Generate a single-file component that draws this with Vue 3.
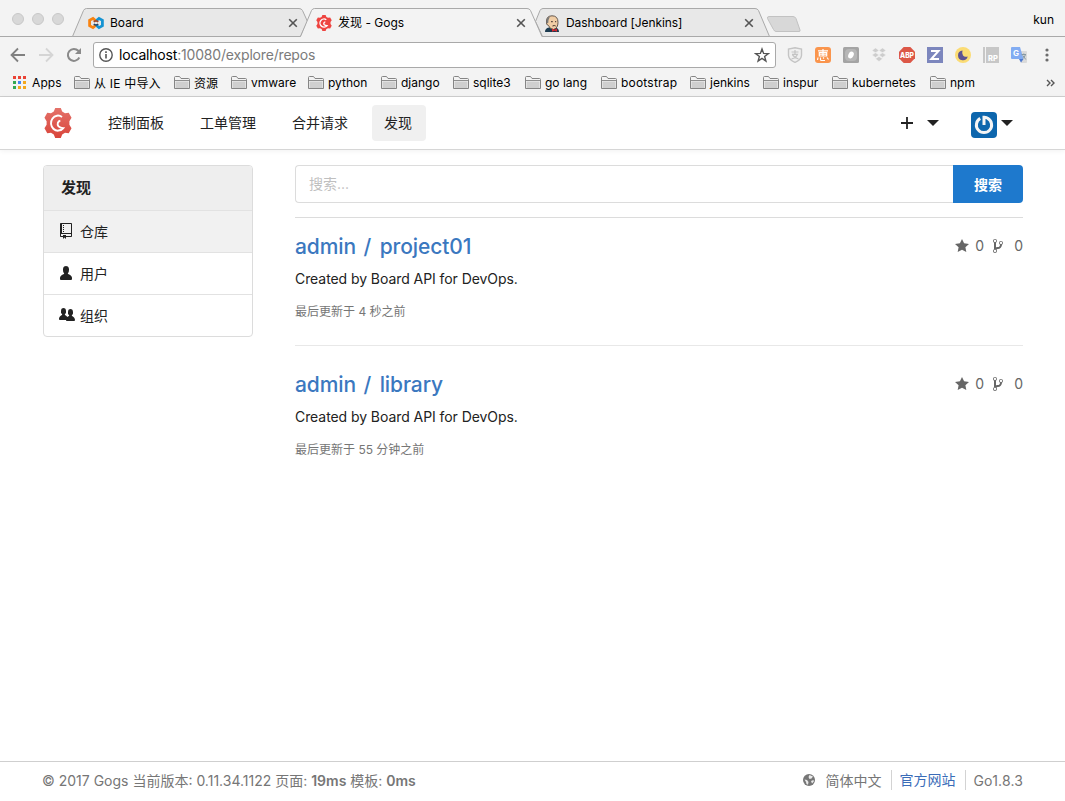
<script setup>
const bookmarks = ['从 IE 中导入', '资源', 'vmware', 'python', 'django', 'sqlite3', 'go lang', 'bootstrap', 'jenkins', 'inspur', 'kubernetes', 'npm']
const appColors = ['#ea4335', '#ea4335', '#ea4335', '#34a853', '#4285f4', '#f4a81c', '#34a853', '#f4a81c', '#f4a81c']
const repos = [
  { owner: 'admin', name: 'project01', updated: '最后更新于 4 秒之前' },
  { owner: 'admin', name: 'library', updated: '最后更新于 55 分钟之前' }
]
const gear = 'M12 0h6l1.500 3.600 3 1.700 4-.5 3 5-2.300 3.400v3.600L29.500 20.200l-3 5-4-.5-3 1.700L18 30h-6l-1.500-3.600-3-1.700-4 .5-3-5 2.300-3.400v-3.600L.5 9.800l3-5 4 .5 3-1.700z'
const gogsG = 'M19.300 9A7.500 7.500 0 1 0 20.500 20.200Q17.500 20 15.500 18.300A3.300 3.300 0 0 1 17.500 12.800'
</script>

<template>
  <div class="page">
    <div class="tabstrip">
      <svg class="tabshapes" width="1065" height="37" viewBox="0 0 1065 37">
        <path d="M0 36.500H1065" stroke="#a9a9a9" />
        <path d="M72.500 36.500 83.500 10.500Q84.500 8.500 86.500 8.500H299Q301.500 8.500 302.500 10.500L307.500 21.500 300.500 36.500Z" fill="#e8e8e8" stroke="#a9a9a9" />
        <path d="M542.500 36.500 535.500 21.500 540 10.500Q541 8.500 543 8.500H755Q757.500 8.500 758.500 10.500L769.500 36.500Z" fill="#e8e8e8" stroke="#a9a9a9" />
        <path d="M300.500 37 311.500 10.500Q312.500 8.500 314.500 8.500H527Q529.500 8.500 530.500 10.500L542 37Z" fill="#f3f3f3" />
        <path d="M300.500 36.500 311.500 10.500Q312.500 8.500 314.500 8.500H527Q529.500 8.500 530.500 10.500L542 36.500" fill="none" stroke="#a9a9a9" />
        <path d="M769 16.500H793Q795 16.500 796 18.500L800 30Q800.500 31.500 799 31.500H776Q774.500 31.500 773.500 29.500L767.500 18.500Q767 16.500 769 16.500Z" fill="#d8d8d8" stroke="#c2c2c2" />
      </svg>
      <div class="lights"><i></i><i></i><i></i></div>
      <div class="tab">
        <svg width="16" height="16" viewBox="0 0 16 16" fill="none" stroke-width="2.800">
          <path d="M7.500 5.500 5 3.400 1.600 5.300v5.400L5 12.600 7.500 10.500" stroke="#f98310" />
          <path d="M8.500 5.500 11 3.400 14.400 5.300v5.400L11 12.600 8.500 10.500" stroke="#1593d2" />
          <path d="M5.800 7q2.200-2.200 4.400 0" stroke="#a04a2a" stroke-width="1.600" /><path d="M5.800 9q2.200 2.200 4.400 0" stroke="#254465" stroke-width="1.600" />
        </svg>
        <span>Board</span>
        <svg class="close" width="10" height="10" viewBox="0 0 10 10"><path d="M1.200 1.200l7.600 7.600M8.800 1.200l-7.600 7.600" /></svg>
      </div>
      <div class="tab">
        <svg width="16" height="16" viewBox="0 0 30 30"><path :d="gear" fill="#ee4440" /><path :d="gogsG" fill="none" stroke="#fff" stroke-width="2.600" /></svg>
        <span class="cjk">发现 - Gogs</span>
        <svg class="close" width="10" height="10" viewBox="0 0 10 10"><path d="M1.200 1.200l7.600 7.600M8.800 1.200l-7.600 7.600" /></svg>
      </div>
      <div class="tab">
        <svg width="16" height="17" viewBox="0 0 16 17">
          <path d="M1 17q0-4 4-4.500h7q3 1 3 4.500z" fill="#1c3b50" />
          <path d="M2.500 7Q2 1 8 .8q6 0 6 6.500 0 6-4.500 7.200-4-.5-5-4Q2 10 2.500 7z" fill="#f0cda5" stroke="#55483f" stroke-width=".9" />
          <path d="M2.600 8Q2 2 6 1.400L4.500 5 4.200 8z" fill="#777" />
          <path d="M7 6.700h1.800M11 6.700h1.200M8.500 11q2-1 3.200 0" stroke="#3b2e29" fill="none" />
          <path d="M8 13.500l2.500 1.300 2.500-1.300v3.300l-2.500-1-2.500 1z" fill="#d5272f" />
        </svg>
        <span class="jenkins">Dashboard [Jenkins]</span>
        <svg class="close" width="10" height="10" viewBox="0 0 10 10"><path d="M1.200 1.200l7.600 7.600M8.800 1.200l-7.600 7.600" /></svg>
      </div>
      <span class="profile">kun</span>
    </div>

    <div class="toolbar">
      <svg class="back" width="16" height="16" viewBox="0 0 16 16"><path d="M15 8H2M8 1.500 1.500 8 8 14.500" fill="none" stroke="#808080" stroke-width="1.800" /></svg>
      <svg class="fwd" width="16" height="16" viewBox="0 0 16 16"><path d="M1 8h13M8 1.500 14.500 8 8 14.500" fill="none" stroke="#d5d5d5" stroke-width="1.800" /></svg>
      <svg class="reload" width="16" height="16" viewBox="0 0 16 16"><path d="M13.300 10.500A6 6 0 1 1 12.300 3.800L14 5.500" fill="none" stroke="#8a8a8a" stroke-width="2" /><path d="M15 1v6H9z" fill="#8a8a8a" /></svg>
      <div class="address">
        <svg width="14" height="14" viewBox="0 0 14 14"><circle cx="7" cy="7" r="6.200" fill="none" stroke="#555" stroke-width="1.400" /><path d="M7 6v4.500M7 3.300v1.600" stroke="#555" stroke-width="1.600" /></svg>
        <span class="url"><b>localhost</b>:10080/explore/repos</span>
        <svg class="star" width="16" height="16" viewBox="0 0 16 16"><path d="M8 2l1.600 4.400 4.700.2-3.700 2.900 1.300 4.500L8 11.400 4.100 14l1.300-4.500-3.700-2.900 4.700-.2z" fill="none" stroke="#555" stroke-width="1.400" /></svg>
      </div>
      <div class="exts">
        <svg viewBox="0 0 16 16"><path d="M8 .8 14.500 2v6.500Q14 13 8 15.400 2 13 1.500 8.500V2z" fill="#f0f0f0" stroke="#c4c4c4" stroke-width="1.400" /><path d="M4.500 5h7M8 3v4M5 7.300h5.500Q9 11 4.500 12M5.500 8Q8 11 11.500 12" fill="none" stroke="#c4c4c4" stroke-width="1.200" /></svg>
        <svg viewBox="0 0 16 16"><rect width="16" height="16" rx="3" fill="#fa954d" /><path d="M3 3.800h10M8 2v7M4.300 5.500h7.400V9H4.300zM4.300 7.200h7.400M3 10.500 2.500 13M5.500 10.500v2q0 1 1 1h3.500M8 10.500l1 1M12 10.500l1.500 2" fill="none" stroke="#fff" stroke-width="1.200" /></svg>
        <svg viewBox="0 0 16 16"><rect width="16" height="16" rx="1.500" fill="#a4a4a4" /><rect x="2" y="2" width="12" height="12" rx="4" fill="#b7b7b7" /><ellipse cx="8" cy="8" rx="2.600" ry="3.600" transform="rotate(25 8 8)" fill="#fff" /></svg>
        <svg viewBox="0 0 16 16" fill="#cdcdcd"><path d="M4.500 1 8 3.400 4.500 5.700 1 3.400zM11.500 1 15 3.400 11.500 5.700 8 3.400zM4.500 5.700 8 8l-3.500 2.400L1 8zM11.500 5.700 15 8l-3.500 2.400L8 8zM8 9.500l3.500 2.300L8 14.500l-3.500-2.700z" stroke="#f3f3f3" stroke-width=".5" /></svg>
        <svg viewBox="0 0 16 16"><path d="M4.700 0h6.600L16 4.700v6.600L11.300 16H4.700L0 11.300V4.700z" fill="#dc5747" /><text x="8" y="10.600" text-anchor="middle" font-size="7" font-weight="800" textLength="14" lengthAdjust="spacingAndGlyphs" fill="#fff">ABP</text></svg>
        <svg viewBox="0 0 16 16"><rect width="16" height="16" fill="#7c86bd" /><path d="M4 4h7.500L4.300 12H12" fill="none" stroke="#fff" stroke-width="2" /></svg>
        <svg viewBox="0 0 16 16"><circle cx="8" cy="8" r="8" fill="#fbdc74" /><path d="M7.500 3.500a4.900 4.900 0 1 0 5.200 6Q9.500 10.500 8 8.500 6.700 6 7.500 3.500z" fill="#5d5292" /></svg>
        <svg viewBox="0 0 16 16"><path d="M0 0h2v16H0zM3 0h13v16H3z" fill="#c7c7c7" /><text x="10" y="14" text-anchor="middle" font-size="7.500" font-weight="800" fill="#fff">RP</text></svg>
        <svg viewBox="0 0 16 16"><path d="M6 4h9q1 0 1 1v10q0 1-1 1H10z" fill="#dadada" /><path d="M1 0h8l3.500 12H1q-1 0-1-1V1q0-1 1-1z" fill="#82acf2" /><path d="M8 12h4.500L10 15.500z" fill="#4d79cf" /><text x="5" y="9" text-anchor="middle" font-size="8" font-weight="700" fill="#fff">G</text><path d="M10.500 7.500H15M12.800 6.500v1M14.500 7.500q-1 3-2.500 4M11.800 8.500l3 4" stroke="#8598a4" fill="none" /></svg>
      </div>
      <svg class="more" width="4" height="14" viewBox="0 0 4 14" fill="#6c6c6c"><circle cx="2" cy="2" r="1.600" /><circle cx="2" cy="7" r="1.600" /><circle cx="2" cy="12" r="1.600" /></svg>
    </div>

    <div class="bookmarks">
      <div class="bm apps">
        <svg width="13" height="13" viewBox="0 0 13 13"><rect v-for="(c, i) in appColors" :key="i" :x="(i % 3) * 5" :y="Math.floor(i / 3) * 5" width="3" height="3" :fill="c" /></svg>
        <span>Apps</span>
      </div>
      <div v-for="(b, i) in bookmarks" :key="b" class="bm" :class="{ first: i === 0, wide: b === 'bootstrap' }">
        <svg width="16" height="13" viewBox="0 0 16 13"><path d="M.5 12V1.500q0-1 1-1h4l1.500 2h7.500q1 0 1 1V12.500H.5z" fill="#f3f3f3" stroke="#858585" /><path d="M1.500 5.500h13v6.500h-13z" fill="#cfcfcf" /><path d="M1 4.500h14" stroke="#8f8f8f" /></svg>
        <span>{{ b }}</span>
      </div>
      <svg class="chev" width="9" height="8" viewBox="0 0 9 8"><path d="M1 1l3 3-3 3M5 1l3 3-3 3" fill="none" stroke="#555" stroke-width="1.400" /></svg>
    </div>

    <nav class="nav">
      <svg class="logo" width="28" height="30" viewBox="0 0 30 30" preserveAspectRatio="none">
        <defs><linearGradient id="lg" x2="0" y2="1"><stop stop-color="#e4726a" /><stop offset="1" stop-color="#d9443a" /></linearGradient></defs>
        <path :d="gear" fill="url(#lg)" /><path :d="gogsG" fill="none" stroke="#fff" stroke-width="2" />
      </svg>
      <a>控制面板</a><a>工单管理</a><a>合并请求</a><a class="on">发现</a>
      <div class="right">
        <svg width="12" height="12" viewBox="0 0 12 12"><path d="M6 0v12M0 6h12" stroke="#222" stroke-width="1.800" /></svg>
        <svg class="car1" width="12" height="6" viewBox="0 0 12 6"><path d="M0 0h12L6 6z" fill="#222" /></svg>
        <svg class="avatar" width="26" height="26" viewBox="0 0 26 26"><rect width="26" height="26" rx="4" fill="#0d66ad" /><path d="M9.200 6.400A7.600 7.600 0 1 0 16.800 6.400M13 13V5.300Q15.500 5.200 17.500 6.800" fill="none" stroke="#f5f5f5" stroke-width="3" /></svg>
        <svg class="car2" width="12" height="6" viewBox="0 0 12 6"><path d="M0 0h12L6 6z" fill="#222" /></svg>
      </div>
    </nav>

    <main>
      <aside>
        <h4>发现</h4>
        <a class="on"><svg width="16" height="16" viewBox="-1 0 16 16"><path d="M4 9H3V8h1v1zm0-3H3v1h1V6zm0-2H3v1h1V4zm0-2H3v1h1V2zm8-1v12c0 .55-.45 1-1 1H6v2l-1.500-1.500L3 16v-2H1c-.55 0-1-.45-1-1V1c0-.55.45-1 1-1h10c.55 0 1 .45 1 1zm-1 10H1v2h2v-1h3v1h5v-2zm0-10H2v9h9V1z" /></svg><span>仓库</span></a>
        <a><svg width="16" height="16" viewBox="-1 0 16 16"><path d="M12 14.002a.998.998 0 0 1-.998.998H1.001A1 1 0 0 1 0 13.999V13c0-2.633 4-4 4-4s.229-.409 0-1c-.841-.62-.944-1.590-1-4 .173-2.413 1.867-3 3-3s2.827.586 3 3c-.056 2.410-.159 3.380-1 4-.229.590 0 1 0 1s4 1.367 4 4v1.002z" /></svg><span>用户</span></a>
        <a><svg width="16" height="16" viewBox="0 0 16 16"><path d="M16 12.999c0 .439-.45 1-1 1H7.995c-.539 0-.994-.447-.995-.999H1c-.54 0-1-.561-1-1 0-2.634 3-4 3-4s.229-.409 0-1c-.841-.621-1.058-.59-1-3 .058-2.419 1.367-3 2.500-3s2.442.58 2.500 3c.058 2.410-.159 2.379-1 3-.229.590 0 1 0 1s1.549.711 2.420 2.088C9.196 9.369 10 8.999 10 8.999s.229-.409 0-1c-.841-.62-1.058-.59-1-3 .058-2.419 1.367-3 2.500-3s2.437.581 2.495 3c.059 2.410-.158 2.380-1 3-.229.590 0 1 0 1s3.005 1.366 3.005 4" /></svg><span>组织</span></a>
      </aside>
      <section>
        <div class="search"><div class="field">搜索...</div><button>搜索</button></div>
        <div v-for="r in repos" :key="r.name" class="repo">
          <div class="head">
            <h2>{{ r.owner }} <i>/</i> {{ r.name }}</h2>
            <div class="stats">
              <svg class="s" width="14" height="16" viewBox="0 0 14 16"><path d="M14 6l-4.900-.64L7 1 4.900 5.360 0 6l3.600 3.260L2.670 14 7 11.670 11.330 14l-.93-4.740z" /></svg>
              <span>0</span>
              <svg class="f" width="10" height="16" viewBox="0 0 10 16"><path d="M10 5c0-1.110-.89-2-2-2a1.993 1.993 0 0 0-1 3.720v.3c-.02.52-.23.98-.63 1.380-.4.4-.86.61-1.380.63-.83.02-1.480.16-2 .45V4.720a1.993 1.993 0 0 0-1-3.720C.88 1 0 1.890 0 3a2 2 0 0 0 1 1.720v6.560c-.59.35-1 .99-1 1.720 0 1.110.89 2 2 2 1.110 0 2-.89 2-2 0-.53-.2-1-.53-1.360.09-.06.48-.41.59-.47.25-.11.56-.17.94-.17 1.050-.05 1.950-.45 2.750-1.250S8.950 7.770 9 6.730h-.02C9.590 6.370 10 5.730 10 5zM2 1.800c.66 0 1.200.55 1.200 1.200 0 .65-.55 1.200-1.200 1.200C1.350 4.200.8 3.650.8 3c0-.65.55-1.200 1.200-1.200zm0 12.410c-.66 0-1.200-.55-1.200-1.200 0-.65.55-1.200 1.200-1.200.65 0 1.200.55 1.200 1.200 0 .65-.55 1.200-1.200 1.200zm6-8c-.66 0-1.200-.55-1.200-1.200 0-.65.55-1.200 1.200-1.200.65 0 1.200.55 1.200 1.200 0 .65-.55 1.200-1.200 1.200z" /></svg>
              <span>0</span>
            </div>
          </div>
          <p class="desc">Created by Board API for DevOps.</p>
          <p class="time">{{ r.updated }}</p>
        </div>
      </section>
    </main>

    <footer>
      <span class="copy">© 2017 Gogs 当前版本: 0.11.34.1122 页面: <b>19ms</b> 模板: <b>0ms</b></span>
      <div class="links">
        <svg width="12" height="12" viewBox="0 0 12 12"><circle cx="6" cy="6" r="6" fill="#767676" /><path d="M6.500 1 10 2.500 8.500 4.500 6.500 5 5.500 3zM1.500 5.500 4 6l1.500 2L5 10.800 3.500 10 3 8zM8 7l2.500-1 .3 1.500L9 9.500z" fill="#fff" opacity=".85" /></svg>
        <span class="lang">简体中文</span><a class="site">官方网站</a><span class="go">Go1.8.3</span>
      </div>
    </footer>
  </div>
</template>

<style>
body { margin: 0; background: #fff; overflow: hidden; }
</style>
<style scoped>
* { box-sizing: border-box; }
svg { display: block; flex: none; }
.page { width: 1065px; height: 801px; display: flex; flex-direction: column; background: #fff; font-family: Inter, "Noto Sans CJK SC", sans-serif; color: #222; font-size: 14px; white-space: nowrap; }
.tabstrip { position: relative; height: 37px; flex: none; display: flex; background: #f3f3f3; color: #000; font-size: 12px; }
.tabshapes { position: absolute; left: 0; top: 0; }
.lights { display: flex; gap: 8px; padding: 13px 0 0 12px; width: 88px; }
.lights i { width: 12px; height: 12px; border-radius: 50%; background: #d8d8d8; border: 1px solid #c8c8c8; }
.tab { position: relative; width: 228px; height: 30px; margin-top: 8px; display: flex; align-items: center; }
.tab span { margin-left: 6px; flex: 1; padding-bottom: 2px; }
.tab .cjk { padding-bottom: 3px; }
.tab .jenkins { letter-spacing: -.08px; }
.close { margin-right: 18px; stroke: #555; stroke-width: 1.6; }
.profile { position: relative; margin: 12px 11px 0 auto; }
.toolbar { height: 36px; flex: none; display: flex; align-items: center; background: #f3f3f3; padding-left: 10px; }
.fwd { margin-left: 12px; }
.reload { margin: 0 11px 0 12px; }
.address { width: 683px; height: 26px; background: #fff; border: 1px solid #a9a9a9; border-radius: 3px; display: flex; align-items: center; padding: 0 5px; }
.url { margin-left: 6px; font-size: 14px; color: #7b7b7b; flex: 1; letter-spacing: -.18px; padding-bottom: 1px; }
.url b { font-weight: 400; color: #000; }
.exts { display: flex; gap: 12px; margin-left: 11px; }
.exts svg { width: 16px; height: 16px; }
.more { margin-left: 18px; }
.bookmarks { height: 24px; flex: none; display: grid; grid-template-columns: 61px 100px 57px 77px 73px 72px 72px 76px 89px 73px 69px 98px 116px 9px; align-items: center; padding: 0 0 4px 13px; background: #f3f3f3; border-bottom: 1px solid #cfcfcf; font-size: 12px; color: #000; }
.bm { display: flex; align-items: center; gap: 4px; }
.apps { gap: 6px; letter-spacing: .1px; }
.first { letter-spacing: .2px; }
.wide { letter-spacing: .2px; }
.nav { height: 53px; flex: none; display: flex; padding: 8px 0 0 43px; border-bottom: 1px solid #d6d6d6; box-shadow: 0 1px 5px rgba(0,0,0,.06); }
.logo { margin: 3px 21px 0 1px; }
.nav a { height: 36px; line-height: 36px; padding: 0 17px 0 15px; margin-right: 4px; }
.nav .on { background: #f0f0f0; border-radius: 4px; padding: 0 14px 0 12px; margin-left: 3px; }
.right { display: flex; margin-left: auto; align-items: center; height: 36px; padding-right: 52px; }
.car1 { margin-left: 14px; }
.avatar { margin: 3px 4px 0 32px; }
main { flex: 1; display: flex; padding: 15px 42px 0 43px; align-items: flex-start; }
aside { width: 210px; border: 1px solid #dcdcdc; border-radius: 4px; overflow: hidden; margin-right: 42px; }
aside h4 { margin: 0; height: 44px; line-height: 43px; padding-left: 17px; font-size: 15px; background: #eee; font-weight: 700; }
aside a { display: flex; height: 42px; align-items: center; border-top: 1px solid #e2e2e2; padding-left: 15px; }
aside a svg { fill: #222; margin-top: -1px; }
aside a span { margin-left: 5px; padding-bottom: 2px; }
aside .on { background: #f1f1f1; }
section { flex: 1; }
.search { display: flex; height: 38px; margin-bottom: 14px; }
.field { flex: 1; border: 1px solid #dcdcdc; border-right: 0; border-radius: 4px 0 0 4px; line-height: 36px; padding-left: 13px; color: #bfbfbf; }
button { width: 70px; border: 0; padding: 0 0 1px; background: #1e79cd; color: #fff; border-radius: 0 4px 4px 0; font: 700 14px Inter, "Noto Sans CJK SC", sans-serif; }
.repo { height: 128px; border-top: 1px solid #dcdcdc; padding-top: 14px; }
.repo + .repo { border-top-color: #e8e8e8; padding-top: 24px; }
.head { display: flex; justify-content: space-between; height: 30px; }
h2 { margin: 0; font-size: 21px; line-height: 30px; font-weight: 500; color: #3b78bf; letter-spacing: -.1px; }
h2 i { font-style: normal; margin: 0 3px 0 2px; }
.stats { display: flex; align-items: center; height: 27px; color: #666; fill: #666; }
.s { margin-right: 6px; }
.f { margin: 0 11px 0 9px; }
p { margin: 0; }
.desc { line-height: 20px; margin-top: 7px; letter-spacing: -.07px; }
.time { font-size: 12px; line-height: 18px; margin-top: 14px; color: #767676; }
footer { height: 40px; flex: none; border-top: 1px solid #cfcfcf; display: flex; justify-content: space-between; align-items: center; padding: 0 42px 3px; color: #767676; }
footer b { font-weight: 600; }
.links { display: flex; align-items: center; }
.lang { margin: 0 9px 0 11px; }
.site { color: #3a6cb8; border: solid #d3d3d3; border-width: 0 1px; padding: 0 9px 0 8px; line-height: 20px; }
.go { margin-left: 8px; letter-spacing: .15px; }
</style>
